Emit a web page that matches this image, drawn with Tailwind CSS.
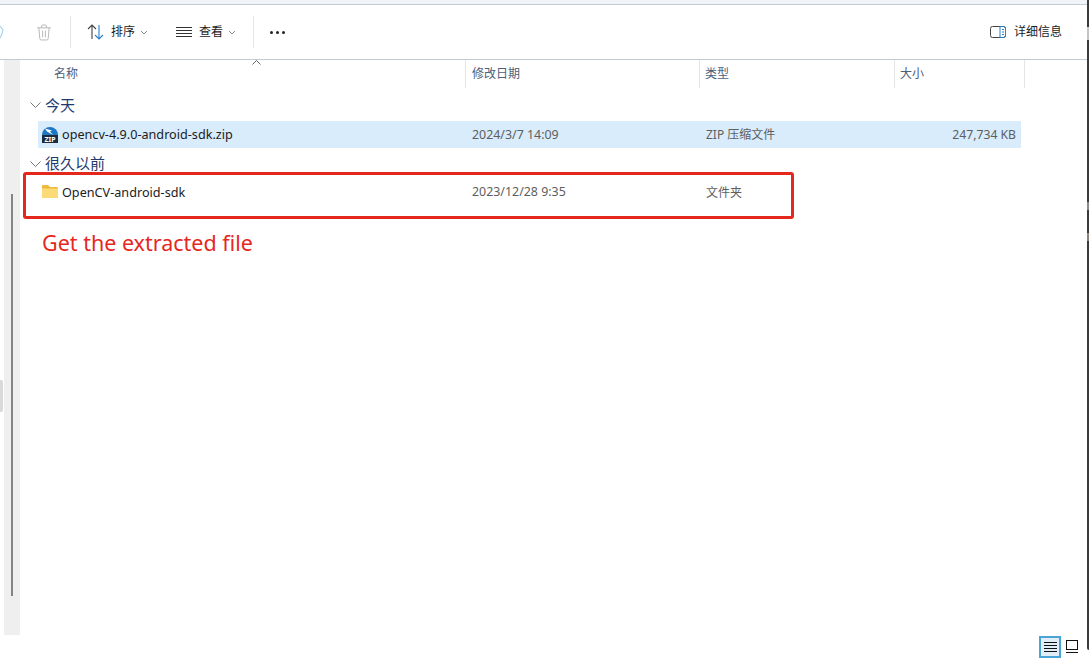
<!DOCTYPE html>
<html lang="en">
<head>
    <meta charset="UTF-8">
    <title>Explorer</title>
    <script src="https://cdn.jsdelivr.net/npm/@tailwindcss/browser@4"></script>
</head>
<body class="bg-white">
<div class="relative w-[1089px] h-[659px] overflow-hidden bg-white text-[12.65px] text-[#1c1c1c] font-['Noto_Sans','Noto_Sans_CJK_SC',sans-serif]">

    <!-- top strip -->
    <div class="h-[5px] bg-[#f0f4f9] border-b border-[#c3ccd3]"></div>

    <!-- toolbar -->
    <div class="h-[55px] flex items-center border-b border-[#c3ccd3] bg-white">
        <svg class="w-[4px] h-[14px]" viewBox="0 0 4 14" fill="none" stroke="#a8d4f0" stroke-width="1.2"><path d="M0 1l3 4-1 4-2 4"/></svg>
        <div class="ml-[33px] w-[14px] flex">
            <svg class="w-[15px] h-[17px]" viewBox="0 0 15 17" fill="none" stroke="#b4b4b4" stroke-width="1">
                <path d="M0 3.500h15M5 3.500V1.500a1 1 0 011-1h3a1 1 0 011 1v2M2 3.500l1 11.500a1.500 1.500 0 001.500 1.500h6A1.500 1.500 0 0012 15l1-11.500M6 6.500v7M9 6.500v7"/>
            </svg>
        </div>
        <div class="w-px h-[32px] bg-[#e5e5e5] ml-[19px]"></div>
        <div class="flex items-center ml-[16px]">
            <svg class="w-[17px] h-[16px]" viewBox="0 0 17 16" fill="none" stroke-width="1.1">
                <path d="M5 15V1M1 5l4-4 4 4" stroke="#444"/>
                <path d="M12 1v14M8 11l4 4 4-4" stroke="#2a7fc9"/>
            </svg>
            <span class="ml-[7px] text-[12px]">排序</span>
            <svg class="w-[8px] h-[5px] ml-[5px]" viewBox="0 0 8 5" fill="none" stroke="#8a8a8a"><path d="M1 1l3 3 3-3"/></svg>
        </div>
        <div class="flex items-center ml-[28px]">
            <svg class="w-[16px] h-[10px]" viewBox="0 0 16 10" stroke="#333" stroke-width="1"><path d="M0 .5h16M0 3.500h16M0 6.500h16M0 9.500h16"/></svg>
            <span class="ml-[7px] text-[12px]">查看</span>
            <svg class="w-[8px] h-[5px] ml-[5px]" viewBox="0 0 8 5" fill="none" stroke="#8a8a8a"><path d="M1 1l3 3 3-3"/></svg>
        </div>
        <div class="w-px h-[32px] bg-[#e5e5e5] ml-[17px]"></div>
        <div class="flex gap-[3px] ml-[16px]">
            <span class="w-[3px] h-[3px] rounded-full bg-[#222]"></span>
            <span class="w-[3px] h-[3px] rounded-full bg-[#222]"></span>
            <span class="w-[3px] h-[3px] rounded-full bg-[#222]"></span>
        </div>
        <div class="flex items-center ml-auto mr-[27px]">
            <svg class="w-[16px] h-[12px]" viewBox="0 0 16 12" fill="none">
                <rect x=".5" y=".5" width="15" height="11" rx="2" stroke="#444"/>
                <path d="M10 .5h3.500a2 2 0 012 2v7a2 2 0 01-2 2H10z" stroke="#2a7fc9"/>
                <path d="M12 3.500h2M12 6h2M12 8.500h2" stroke="#2a7fc9"/>
            </svg>
            <span class="ml-[8px] text-[12px]">详细信息</span>
        </div>
    </div>

    <!-- body -->
    <div class="flex h-[575px]">
        <div class="w-[4px]"></div>
        <div class="w-[16px] bg-[#efefef] relative">
            <div class="absolute left-[7px] top-[134px] w-[2px] h-[402px] bg-[#858585]"></div>
        </div>
        <div class="flex-1 pl-[10px]">
            <!-- column headers -->
            <div class="h-[28px] flex text-[12px] leading-[16px] text-[#4c607a]">
                <div class="w-[436px] pl-[24px] pt-[6px] border-r border-[#e5e5e5]">名称</div>
                <div class="w-[234px] pl-[6px] pt-[6px] border-r border-[#e5e5e5]">修改日期</div>
                <div class="w-[195px] pl-[5px] pt-[6px] border-r border-[#e5e5e5]">类型</div>
                <div class="w-[130px] pl-[5px] pt-[6px] border-r border-[#e5e5e5]">大小</div>
            </div>
            <!-- today -->
            <div class="h-[33px] pt-[1px] flex items-center text-[15px] text-[#1e3a6e]">
                <svg class="w-[11px] h-[6px]" viewBox="0 0 11 6" fill="none" stroke="#777"><path d="M.5.5l5 5 5-5"/></svg>
                <span class="ml-[4px]">今天</span>
            </div>
            <div class="h-[27px] w-[983px] ml-[8px] flex items-center bg-[#d8ecfc]">
                <div class="w-[434px] flex items-center pl-[4px]">
                    <svg class="w-[16px] h-[18px]" viewBox="0 0 16 18">
                        <path d="M0 10a8 8 0 0116 0z" fill="#1d77c4"/>
                        <path d="M3 3.500l7 2-2 1 3 3.500-6-3.500z" fill="#fff"/>
                        <rect y="10" width="16" height="8" fill="#1c2b3f"/>
                        <text x="8" y="17" text-anchor="middle" font-size="7" font-weight="700" fill="#fff">ZIP</text>
                    </svg>
                    <span class="ml-[4px]">opencv-4.9.0-android-sdk.zip</span>
                </div>
                <div class="w-[234px] pt-[1px] text-[#5e5e5e] text-[12.4px]">2024/3/7 14:09</div>
                <div class="w-[190px] pt-[1px] text-[#5e5e5e] text-[12px]">ZIP 压缩文件</div>
                <div class="w-[120px] pt-[1px] text-right text-[#5e5e5e] text-[12.2px]">247,734 KB</div>
            </div>
            <!-- long ago -->
            <div class="h-[31px] flex items-center text-[15px] text-[#1e3a6e]">
                <svg class="w-[11px] h-[6px]" viewBox="0 0 11 6" fill="none" stroke="#777"><path d="M.5.5l5 5 5-5"/></svg>
                <span class="ml-[4px]">很久以前</span>
            </div>
            <div class="h-[27px] ml-[8px] flex items-center">
                <div class="w-[434px] flex items-center pl-[4px]">
                    <svg class="w-[16px] h-[14px] mb-[2px]" viewBox="0 0 16 14">
                        <path d="M0 2a1 1 0 011-1h5l2 2h7a1 1 0 011 1v9a1 1 0 01-1 1H1a1 1 0 01-1-1z" fill="#eeb93a"/>
                        <path d="M0 4.500h16v8.500a1 1 0 01-1 1H1a1 1 0 01-1-1z" fill="#fbdb78"/>
                    </svg>
                    <span class="ml-[4px]">OpenCV-android-sdk</span>
                </div>
                <div class="w-[234px] text-[#5e5e5e] text-[12.4px]">2023/12/28 9:35</div>
                <div class="text-[#5e5e5e] text-[12px]">文件夹</div>
            </div>
            <div class="mt-[24px] ml-[12px] text-[21.5px] leading-[26px] text-[#e5281e]">Get the extracted file</div>
        </div>
    </div>

    <!-- annotation box -->
    <div class="absolute left-[23px] top-[172px] w-[771px] h-[47px] border-[3px] border-[#e5281e] rounded-[3px]"></div>
    <!-- sort caret -->
    <svg class="absolute left-[252px] top-[60px] w-[9px] h-[5px]" viewBox="0 0 9 5" fill="none" stroke="#666"><path d="M.5 4.500l4-4 4 4"/></svg>
    <!-- left sliver -->
    <div class="absolute left-0 top-[380px] w-[3px] h-[32px] bg-[#d9d9d9] rounded-r-[2px]"></div>
    <!-- view switch -->
    <div class="absolute left-[1039px] top-[636px] w-[22px] h-[22px] border-2 border-[#4aa5d6] bg-[#e1eef8] flex items-center justify-center">
        <svg class="w-[13px] h-[12px]" viewBox="0 0 13 12" stroke="#111"><path d="M0 1.500h13M0 4.500h13M0 7.500h13M0 10.500h13"/></svg>
    </div>
    <svg class="absolute left-[1065px] top-[640px] w-[14px] h-[14px]" viewBox="0 0 14 14" fill="none" stroke="#111"><rect x="1.5" y=".5" width="11" height="9"/><path d="M1 12.500h12"/></svg>
    <!-- right window edge -->
    <div class="absolute right-0 top-0 w-[2px] h-[650px] bg-[#3a3a3a] rounded-bl-[2px]"></div>
    <div class="absolute right-0 top-[27px] w-[2px] h-[13px] bg-[#c4c4c4]"></div>
    <div class="absolute right-0 top-[202px] w-[2px] h-[8px] bg-[#8b8b85]"></div>
    <div class="absolute right-0 top-[233px] w-[2px] h-[8px] bg-[#8f8378]"></div>
</div>
</body>
</html>
